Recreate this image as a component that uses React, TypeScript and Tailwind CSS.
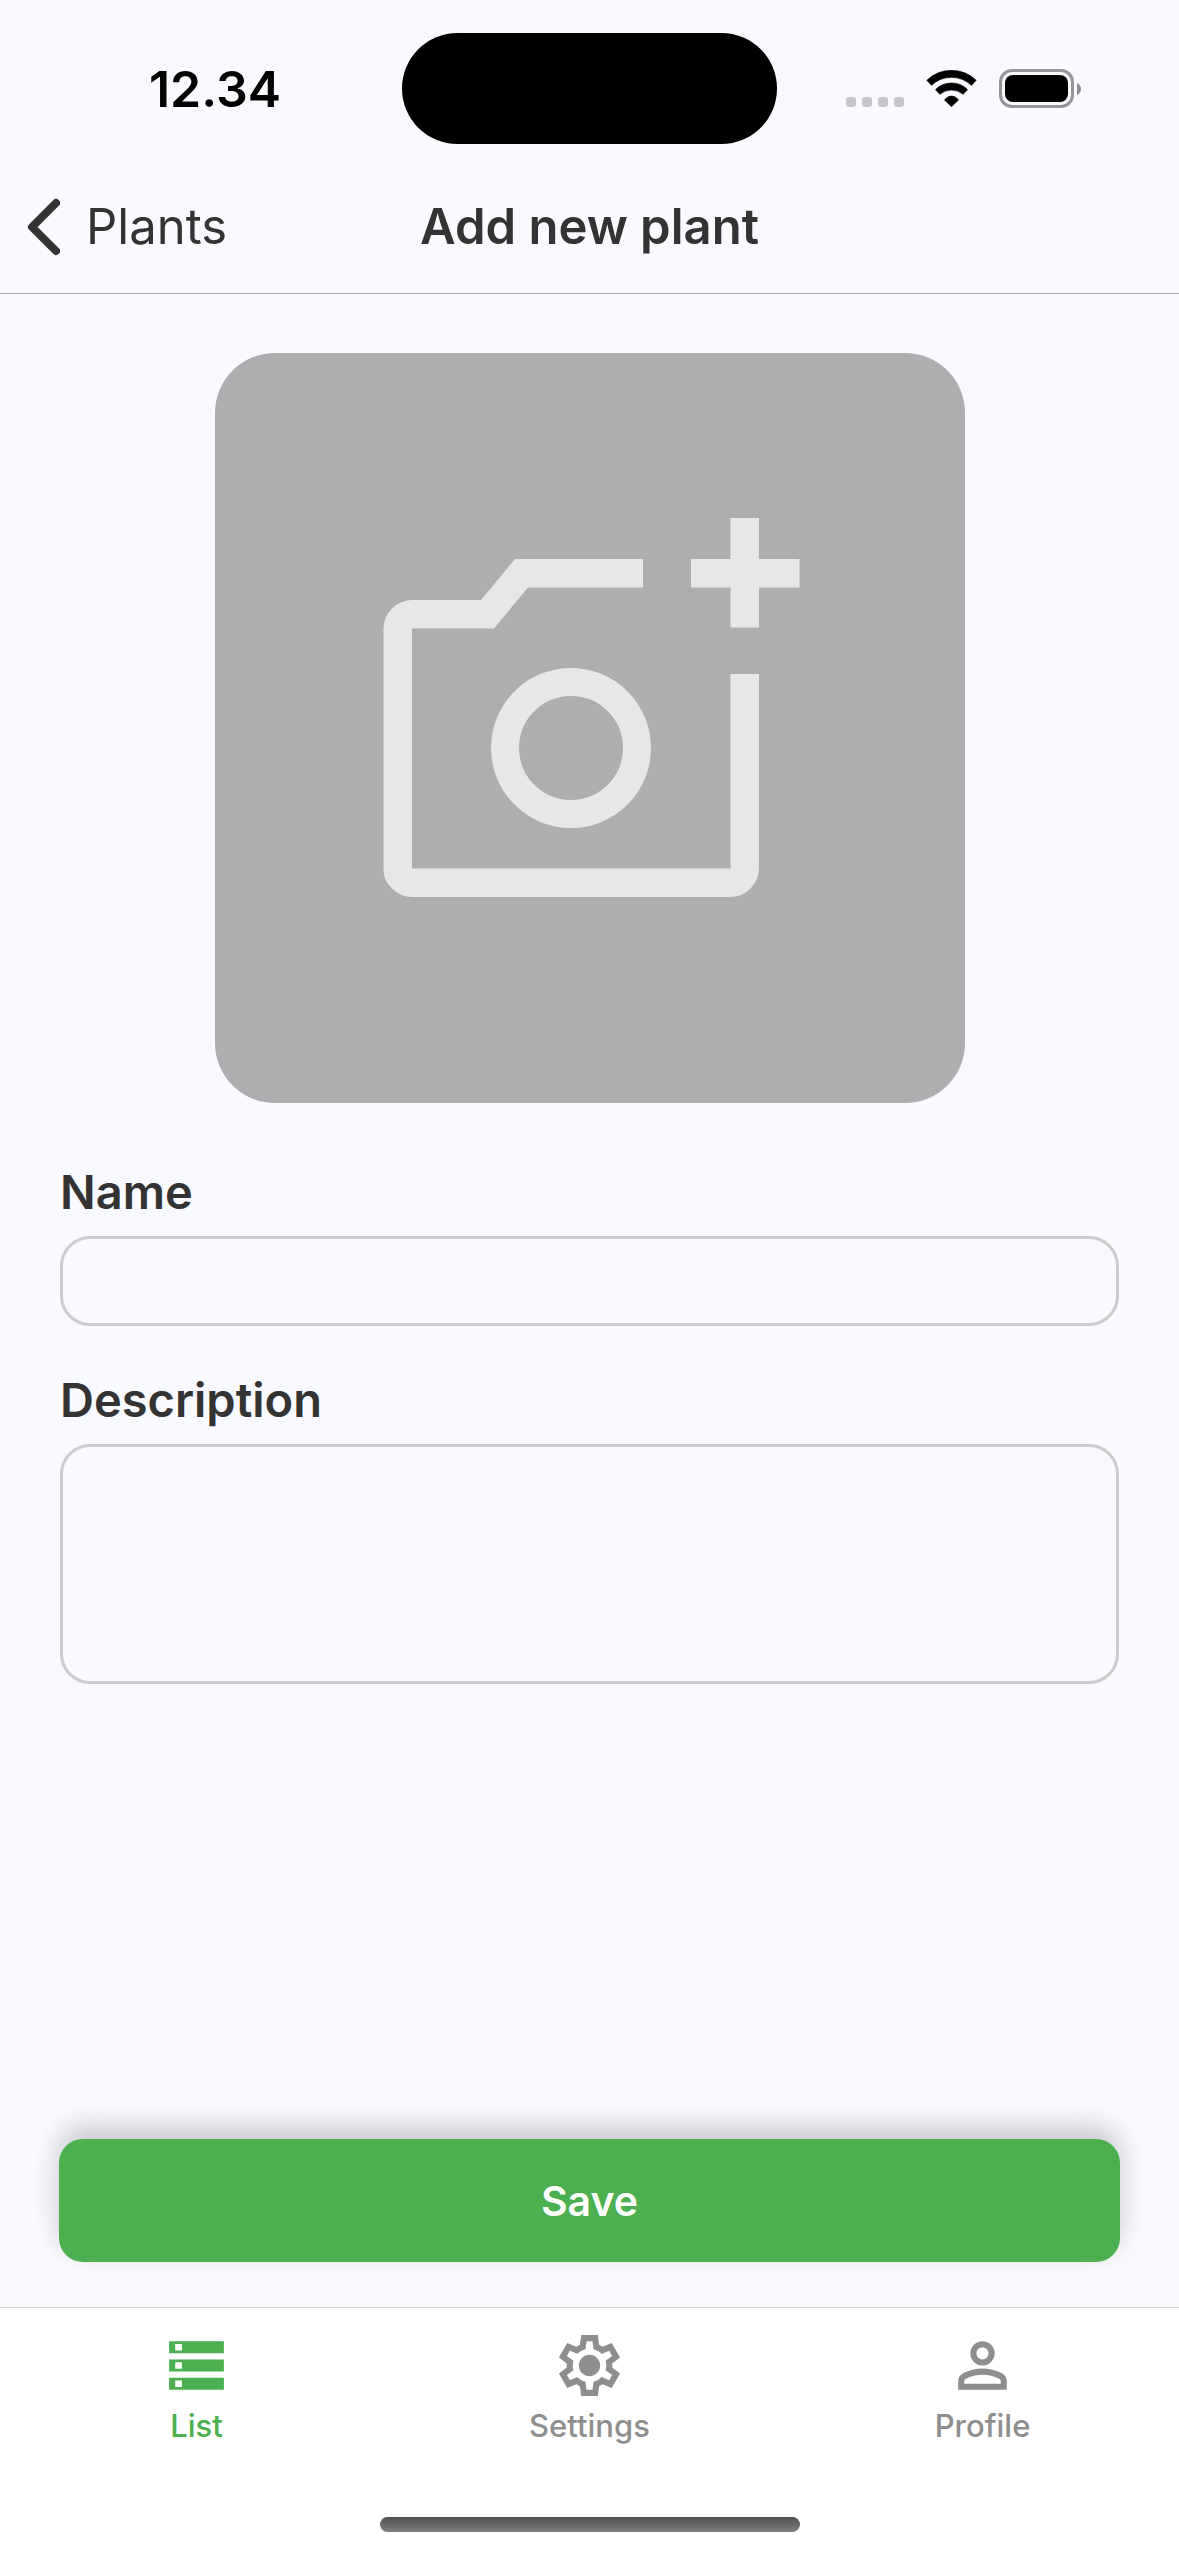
import type { ReactNode } from "react";

function WifiIcon() {
  return (
    <svg viewBox="0 0 152 111" className="h-[37px] w-[51px]" fill="#000" stroke="#000" strokeWidth="2" strokeLinejoin="round" aria-hidden="true">
      <path d="M2 31Q33 1 76 1T150 31L136 46Q110 22 76 22T16 46Z" />
      <path d="M28 59Q47 39 76 39T124 59L111 73Q96 60 76 60T41 73Z" />
      <path d="M76 110L55 90Q64 78 76 78T97 90Z" />
    </svg>
  );
}

function Battery() {
  return (
    <div className="flex items-center gap-[3px]">
      <div className="h-[39px] w-[75px] rounded-[13px] border-[3px] border-[#959698] p-[3px]">
        <div className="h-full w-full rounded-[8px] bg-black" />
      </div>
      <svg viewBox="0 0 4 12" className="h-3 w-1" fill="#8c8d8f" aria-hidden="true">
        <path d="M0 0Q4 2 4 6T0 12Z" />
      </svg>
    </div>
  );
}

function AddPhotoIcon() {
  return (
    <svg viewBox="0 0 450 450" className="h-3/5 w-3/5" fill="#e6e8e7" aria-hidden="true">
      <path d="M47 394Q36 394 27 385.500T18.500 365.500V125.500Q18.500 114 27 105.500T47 97H116L150 56H278V84.500H163L129 125.500H47V365.500H365.500V171H394V365.500Q394 377 385.500 385.500T365.500 394Z" />
      <path d="M365.500 124.500V84.500H326V56H365.500V15H394V56H434.500V84.500H394V124.500Z" />
      <circle cx="206" cy="245" r="66" fill="none" stroke="#e6e8e7" strokeWidth="28" />
    </svg>
  );
}

function ListIcon() {
  return (
    <svg viewBox="0 0 24 24" className="size-[73px]" fill="currentColor" fillRule="evenodd" aria-hidden="true">
      <path d="M3 4H21V8H3ZM5 4.900V7.100H7.200V4.900Z" />
      <path d="M3 10H21V14H3ZM5 10.900V13.100H7.200V10.900Z" />
      <path d="M3 16H21V20H3ZM5 16.900V19.100H7.200V16.900Z" />
    </svg>
  );
}

function SettingsIcon() {
  return (
    <svg viewBox="0 0 24 24" className="size-[73px]" fill="currentColor" fillRule="evenodd" aria-hidden="true">
      <path d="M9.25 22l-.4-3.2q-.325-.125-.6125-.3T7.675 18.125L4.7 19.375 1.95 14.625l2.575-1.95Q4.5 12.5 4.5 12.3375v-.675q0-.1625.025-.3375L1.95 9.375 4.7 4.625l2.975 1.25q.275-.2.575-.375t.6-.3L9.25 2h5.5l.4 3.2q.325.125.6125.3t.5625.375L19.3 4.625l2.75 4.75-2.575 1.95q.025.175.025.3375v.675q0 .1625-.05.3375l2.6 1.95-2.75 4.75-2.975-1.25q-.275.2-.575.375t-.6.3L14.75 22ZM11 20h1.975l.35-2.65q.775-.2 1.4375-.5875T15.975 15.8l2.475 1.05.975-1.7-2.15-1.625q.125-.35.175-.7375T17.5 12q0-.4-.05-.7875t-.175-.7375l2.15-1.625-.975-1.7-2.475 1.05q-.55-.575-1.2125-.9625T13.325 6.65L13 4h-1.975l-.35 2.65q-.775.2-1.4375.5875T8.025 8.175L5.55 7.15l-.975 1.7 2.15 1.6q-.125.375-.175.75T6.5 12q0 .4.05.775t.175.75l-2.15 1.625.975 1.7 2.475-1.05q.55.575 1.2125.9625T10.675 17.35Z" />
      <circle cx="12" cy="12" r="3.500" />
    </svg>
  );
}

function ProfileIcon() {
  return (
    <svg viewBox="0 0 24 24" className="size-[73px]" fill="currentColor" fillRule="evenodd" aria-hidden="true">
      <circle cx="12" cy="8" r="3" fill="none" stroke="currentColor" strokeWidth="2" />
      <path d="M4 20v-2.8q0-.85.4375-1.5625T5.6 14.55q1.55-.775 3.15-1.1625T12 13t3.25.3875T18.4 14.55q.725.375 1.1625 1.0875T20 17.2V20ZM6 18h12v-.8q0-.275-.1375-.5T17.5 16.35q-1.35-.675-2.725-1.0125T12 15t-2.775.3375T6.5 16.35q-.225.125-.3625.35T6 17.2Z" />
    </svg>
  );
}

function StatusBar() {
  return (
    <div className="grid h-[177px] grid-cols-[1fr_375px_1fr] items-center">
      <time className="pl-7 text-center text-[50px] leading-[60px] font-semibold text-black">12.34</time>
      <div className="h-[111px] rounded-full bg-black" />
      <div className="flex items-center justify-end gap-[22px] pr-[98px]">
        <div className="flex h-[37px] items-end gap-1.5">
          {[0, 1, 2, 3].map((dot) => (
            <span key={dot} className="size-2.5 rounded-[3px] bg-[#c6c7cb]" />
          ))}
        </div>
        <WifiIcon />
        <Battery />
      </div>
    </div>
  );
}

function Header() {
  return (
    <header className="grid h-[117px] grid-cols-[1fr_auto_1fr] items-center border-b border-[#adaeb2] pb-4 text-[49px] leading-[60px] text-[#333]">
      <a href="#plants" className="flex items-center gap-[26px] pl-[27px]">
        <svg viewBox="0 0 33 58" className="h-[58px] w-[33px]" fill="none" stroke="#333" strokeWidth="8" strokeLinecap="round" strokeLinejoin="round" aria-hidden="true">
          <path d="M29 5L5 29L29 53" />
        </svg>
        Plants
      </a>
      <h1 className="font-semibold">Add new plant</h1>
    </header>
  );
}

function Tab({ label, href, icon, active = false }: { label: string; href: string; icon: ReactNode; active?: boolean }) {
  return (
    <a
      href={href}
      aria-current={active ? "page" : undefined}
      className={`flex flex-1 flex-col items-center gap-1 text-[31px] leading-10 font-medium ${active ? "text-[#4caf50]" : "text-[#8e8e8e]"}`}
    >
      {icon}
      {label}
    </a>
  );
}

const field = "block w-full resize-none rounded-[30px] border-[3px] border-[#cbcccb] bg-transparent px-6 text-[47px] text-[#333]";
const fieldLabel = "mb-3.5 block text-[47px] leading-[60px] font-semibold text-[#333]";

export default function App() {
  return (
    <div className="flex min-h-screen flex-col bg-[#f8fafe] font-[Inter,sans-serif]">
      <StatusBar />
      <Header />
      <main className="flex flex-1 flex-col">
        <form className="flex flex-1 flex-col px-[59px] pt-[59px] pb-[45px]" onSubmit={(e) => e.preventDefault()}>
          <button type="button" aria-label="Add photo" className="mx-auto flex aspect-square w-[750px] max-w-full items-center justify-center rounded-[60px] bg-[#adaeb0]">
            <AddPhotoIcon />
          </button>
          <div className="mt-[59px] px-px">
            <label htmlFor="name" className={fieldLabel}>Name</label>
            <input id="name" type="text" className={`${field} h-[90px]`} />
          </div>
          <div className="mt-11 px-px">
            <label htmlFor="description" className={fieldLabel}>Description</label>
            <textarea id="description" className={`${field} h-60 py-4`} />
          </div>
          <button type="submit" className="mt-auto h-[123px] w-full rounded-3xl bg-[#4caf50] text-[41px] leading-[60px] font-semibold text-white shadow-[0_-12px_28px_rgba(0,0,0,0.2)]">
            Save
          </button>
        </form>
      </main>
      <footer className="border-t border-[#d3d4d8] bg-white pt-[21px] pb-6">
        <nav className="flex" aria-label="Main">
          <Tab label="List" href="#list" icon={<ListIcon />} active />
          <Tab label="Settings" href="#settings" icon={<SettingsIcon />} />
          <Tab label="Profile" href="#profile" icon={<ProfileIcon />} />
        </nav>
        <div className="mx-auto mt-[71px] h-[15px] w-[420px] rounded-full bg-linear-to-b from-[#505050] to-[#808080]" />
      </footer>
    </div>
  );
}
